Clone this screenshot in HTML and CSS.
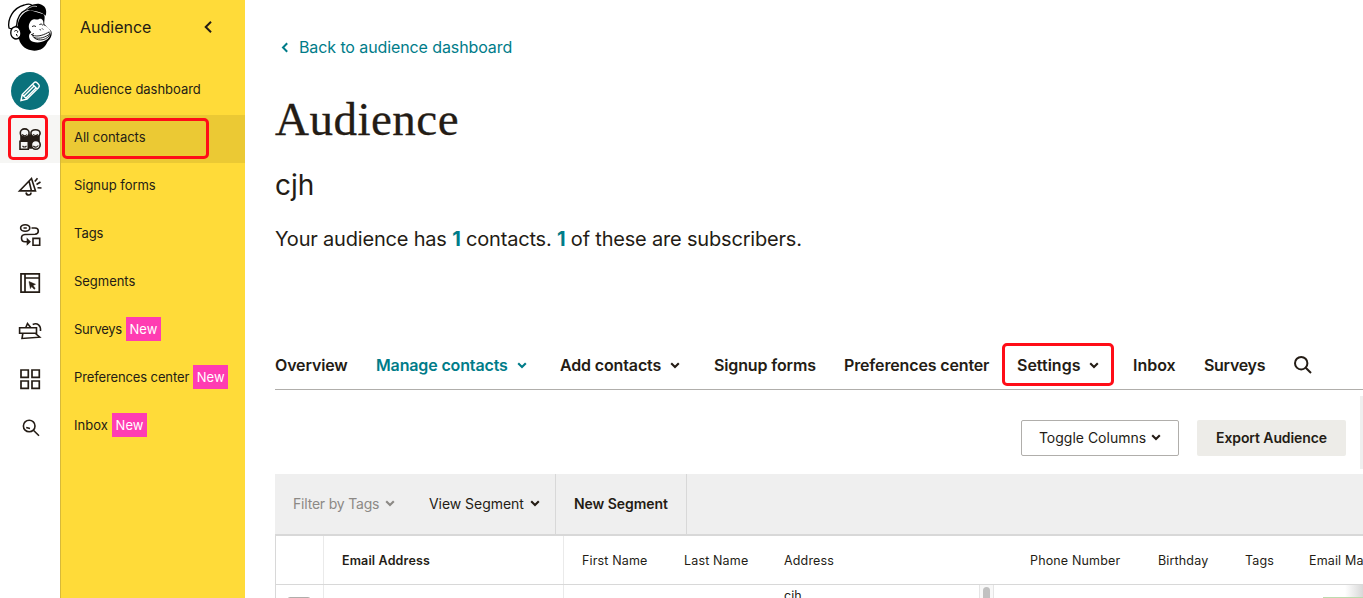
FILE: index.html
```html
<!DOCTYPE html>
<html lang="en">
<head>
<meta charset="utf-8">
<title>Audience</title>
<link rel="stylesheet" href="styles.css">
</head>
<body>
<svg class="defs"><defs><symbol id="chev" viewBox="0 0 10 7"><path d="M1.2 1.3 5 5.1 8.8 1.3" fill="none" stroke="currentColor" stroke-width="2.1"/></symbol></defs></svg>
<div class="app">
  <nav class="rail">
    <div class="logo"><svg width="60" height="62" viewBox="0 0 180 186">
      <path d="M53 78C54 56 70 34 91 31L131 43C137 50 132 60 133 73L154 94C158 107 150 118 142 126C135 143 122 152 103 152C80 152 62 138 57 118L42 116Z" fill="#000"/>
      <path d="M27 84C22 58 38 24 73 15C86 10 93 12 97 17L79 29C60 38 51 54 50 76C47 83 35 89 27 84Z" fill="#fff" stroke="#000" stroke-width="4"/>
      <path d="M76 31C84 18 104 9 119 12C136 16 142 31 137 47C123 35 103 31 76 31Z"/>
      <path d="M80 29C92 19 104 17 111 20" fill="none" stroke="#fff" stroke-width="2"/>
      <path d="M33 92C36 79 54 76 59 88C65 96 64 109 57 113C47 122 29 113 33 92Z" fill="#fff" stroke="#000" stroke-width="4"/>
      <path d="M43 94C49 88 56 94 52 98M49 102L52 109" fill="none" stroke="#000" stroke-width="3"/>
      <path d="M91 93C82 81 88 67 95 61C104 53 111 62 117 57C126 54 132 62 130 75C144 80 153 91 152 98C151 108 146 115 138 120C122 131 97 129 90 119C86 110 86 102 94 97Z" fill="#fff"/>
      <path d="M97 79Q102 75 107 79M119 73Q124 69 128 75M98 106C115 112 133 104 147 96M98 105C99 120 127 126 143 112C149 107 151 101 147 97M103 113C121 118 137 111 148 103M94 104L101 101M120 88L121 90M127 86L129 88" fill="none" stroke="#000" stroke-width="2.6" stroke-linecap="round"/>
    </svg></div>
    <div class="create"><svg width="38" height="38" viewBox="0 0 38 38" fill="none" stroke="#fff" stroke-width="1.4"><path d="M10 28.5 11.2 22.5 23 10.7Q24.5 9.4 26 10.7L27.7 12.4Q29 14 27.7 15.5L16 27.2ZM21.5 12.2 26.2 17M13 24 22.8 14.2M15 26 24.7 16.2M11.2 22.5 16 27.2"/></svg></div>
    <div class="rail-item current"><svg width="26" height="26" viewBox="0 0 26 26" fill="none" stroke="#241c15" stroke-width="1.6"><path d="M4 9H22V18H14.5V22H11.5V18H4Z" fill="#241c15"/><ellipse cx="7.7" cy="7" rx="4.4" ry="4.1" fill="#f6f6f4"/><ellipse cx="18.5" cy="7.3" rx="4.6" ry="3.6" fill="#f6f6f4"/><path d="M3 15.2H11.3V23.2H3Z" fill="#f6f6f4"/><circle cx="18.8" cy="18.8" r="4.4" fill="#f6f6f4"/><path d="M5 8.5Q8 11 10 8.5M16 8.5Q19 10.5 21 8.5M5.5 20Q7.5 22 9.5 20M16.3 20Q19 22.5 21.3 19.5" stroke-width="1.1"/></svg></div>
    <div class="rail-item"><svg width="26" height="26" viewBox="0 0 26 26" fill="none" stroke="#241c15" stroke-width="1.6"><path d="M14.5 4.5 18.5 17H2.5ZM2.5 16.8H18M12 7 14.5 17M9 18.5Q9.4 21 11.7 21Q14 21 14 18.5M17.8 7.5 20.5 4.2M19.5 10.5 23.5 8M20.5 13.7 24.5 14"/></svg></div>
    <div class="rail-item"><svg width="26" height="26" viewBox="0 0 26 26" fill="none" stroke="#241c15" stroke-width="1.6"><ellipse cx="8.2" cy="6" rx="4.6" ry="3.3"/><path d="M6.5 6H9.8M14.5 6H18Q21.3 6 21.3 9Q21.3 12 18 12.2L8 12.5Q4.5 12.8 4.5 16Q4.5 19.8 8 19.8H12.5M10.5 17.5 12.8 19.8 10.5 22ZM16 16.4H22.7V23.2H16Z"/></svg></div>
    <div class="rail-item"><svg width="26" height="26" viewBox="0 0 26 26" fill="none" stroke="#241c15" stroke-width="1.7"><path d="M4 3.9H22.3V22.2H4ZM8 4V22M8 8H22"/><path d="M12 11.5 18.5 14.3 16 15.4 18.2 18.4 17.1 19.3 14.7 16.5 13.4 18.6Z" fill="#241c15" stroke-width=".5"/></svg></div>
    <div class="rail-item"><svg width="26" height="26" viewBox="0 0 26 26" fill="none" stroke="#241c15" stroke-width="1.6"><path d="M2.6 9.7H19.5V15.3H2.6ZM8.8 9.5 10.5 5.5 13.7 9.5M5.8 15.7 5 20.5 22.7 19.2 18.5 15.5M15.7 6.4C20.5 4.5 24 7.4 23.5 13"/></svg></div>
    <div class="rail-item"><svg width="26" height="26" viewBox="0 0 26 26" fill="none" stroke="#241c15" stroke-width="1.7"><path d="M4 4H11.3V11.3H4ZM15 4H22.3V11.3H15ZM4 15H11.3V22.3H4ZM15 15H22.3V22.3H15Z"/></svg></div>
    <div class="rail-item"><svg width="26" height="26" viewBox="0 0 26 26" fill="none" stroke="#241c15" stroke-width="1.6"><circle cx="12.2" cy="12" r="5.8"/><path d="M16.4 16.2 22 21.7M9.2 13.6 13 14.6"/></svg></div>
    <i class="mark mark-rail"></i>
  </nav>
  <aside class="side">
    <header class="side-head"><span>Audience</span><svg width="10" height="14" viewBox="0 0 10 14"><path d="M8 1.7 2.7 7 8 12.3" fill="none" stroke="#241c15" stroke-width="2"/></svg></header>
    <a class="side-item"><span>Audience dashboard</span></a>
    <a class="side-item selected"><span>All contacts</span></a>
    <a class="side-item"><span>Signup forms</span></a>
    <a class="side-item"><span>Tags</span></a>
    <a class="side-item"><span>Segments</span></a>
    <a class="side-item"><span class="tight">Surveys</span><b>New</b></a>
    <a class="side-item"><span class="snug">Preferences center</span><b>New</b></a>
    <a class="side-item"><span class="loose">Inbox</span><b>New</b></a>
    <i class="mark mark-side"></i>
  </aside>
  <main class="main">
    <a class="back"><svg width="9" height="11" viewBox="0 0 9 11"><path d="M7.2 1.2 3 5.5 7.2 9.8" fill="none" stroke="currentColor" stroke-width="2"/></svg><span>Back to audience dashboard</span></a>
    <h1>Audience</h1>
    <h2>cjh</h2>
    <p class="summary">Your audience has <b>1</b> contacts. <b>1</b> of these are subscribers.</p>
    <nav class="tabs">
      <a class="tab overview"><span>Overview</span></a>
      <a class="tab manage"><span>Manage contacts</span><svg width="10" height="7"><use href="#chev"/></svg></a>
      <a class="tab add"><span>Add contacts</span><svg width="10" height="7"><use href="#chev"/></svg></a>
      <a class="tab signup"><span>Signup forms</span></a>
      <a class="tab prefs"><span>Preferences center</span></a>
      <a class="tab settings"><span>Settings</span><svg width="10" height="7"><use href="#chev"/></svg><i class="mark mark-tab"></i></a>
      <a class="tab inbox"><span>Inbox</span></a>
      <a class="tab surveys"><span>Surveys</span></a>
      <svg class="find" width="20" height="20" viewBox="0 0 20 20" fill="none" stroke="#241c15" stroke-width="2"><circle cx="8.2" cy="8.2" r="6.2"/><path d="M12.7 12.7 18 18"/></svg>
    </nav>
    <div class="actions">
      <button class="toggle"><span>Toggle Columns</span><svg width="10" height="7"><use href="#chev"/></svg></button>
      <button class="export"><span>Export Audience</span></button>
      <i class="edge"></i>
    </div>
    <div class="filters">
      <a class="filter tags"><span>Filter by Tags</span><svg width="10" height="7"><use href="#chev"/></svg></a>
      <a class="filter view"><span>View Segment</span><svg width="10" height="7"><use href="#chev"/></svg></a>
      <a class="filter new"><span>New Segment</span></a>
    </div>
    <div class="table">
      <div class="row head"><div></div><div><b>Email Address</b></div><div><span>First Name</span></div><div><span>Last Name</span></div><div><span>Address</span></div><div><span>Phone Number</span></div><div><span>Birthday</span></div><div><span>Tags</span></div><div><span>Email Marketing</span></div></div>
      <div class="row body"><div><i class="check"></i></div><div></div><div></div><div></div><div class="address"><span>cjh</span><i class="scroll"></i></div><div></div><div></div><div></div><div class="status"><i></i></div></div>
    </div>
  </main>
</div>
</body>
</html>
```
FILE: styles.css
```css
* { box-sizing: border-box; }
body { margin: 0; background: #fff; color: #241c15; font-family: Inter, "Liberation Sans", sans-serif; font-size: 13px; overflow: hidden; }
.defs { position: absolute; width: 0; height: 0; }
span, b { white-space: nowrap; }
.app { display: flex; width: 1363px; height: 598px; overflow: hidden; }

.rail { position: relative; flex: none; width: 60px; display: flex; flex-direction: column; }
.logo { height: 72px; }
.logo svg { display: block; }
.create { width: 38px; height: 38px; margin: 0 0 5px 11px; border-radius: 50%; background: #0a727c; }
.create svg { display: block; }
.rail-item { height: 48px; padding: 11px 17px; }
.rail-item svg { display: block; }
.current { background: #f6f6f4; }

.mark { position: absolute; border: 3px solid #ff0d17; border-radius: 5px; }
.mark-rail { left: 8px; top: 115px; width: 40px; height: 45px; }
.mark-side { left: 1px; top: 118px; width: 147px; height: 41px; }
.mark-tab { left: -15px; top: -21px; width: 112px; height: 43px; }

.side { position: relative; flex: none; width: 185px; border-left: 1px solid #d7b93a; background: #ffdb39; }
.side-head { height: 67px; display: flex; align-items: flex-start; padding: 17px 0 0 19px; font-size: 16px; line-height: 20px; }
.side-head span { width: 123px; }
.side-head svg { margin-top: 3px; }
.side-item { height: 48px; display: flex; align-items: center; gap: 4px; padding: 0 0 4px 13px; letter-spacing: -.03px; }
.side-item b { width: 35px; height: 24px; line-height: 25px; text-align: center; font-weight: 400; letter-spacing: 0; color: #fff; background: #ff3cb2; }
.side-item .tight { letter-spacing: -.25px; }
.side-item .snug { letter-spacing: -.12px; }
.side-item .loose { letter-spacing: .05px; }
.selected { background: #ebc934; }

.main { flex: none; width: 1118px; padding-left: 30px; }
.back { display: flex; align-items: center; gap: 10px; height: 24px; margin-top: 35px; padding-left: 5px; font-size: 16px; color: #007c89; }
.back span { letter-spacing: -.1px; }
h1 { margin: 30px 0 0; height: 60px; font: 400 47px/60px "Liberation Serif", serif; letter-spacing: .5px; -webkit-text-stroke: .3px #241c15; }
h2 { margin: 16px 0 0; font-size: 28px; line-height: 40px; font-weight: 400; }
.summary { margin: 19px 0 0; font-size: 20px; line-height: 30px; letter-spacing: -.19px; }
.summary b { color: #007c89; font-weight: 700; }

.tabs { display: flex; align-items: center; height: 51px; margin-top: 85px; padding-top: 2px; border-bottom: 1px solid #b0aeab; font-size: 16px; font-weight: 600; letter-spacing: -.14px; }
.tab { position: relative; flex: none; display: flex; align-items: center; height: 2px; }
.tab svg { margin-left: 9px; flex: none; }
.overview { width: 101px; }
.manage { width: 184px; color: #007c89; }
.add { width: 154px; }
.signup { width: 130px; }
.prefs { width: 173px; }
.settings { width: 116px; letter-spacing: 0; }
.inbox { width: 71px; letter-spacing: 0; }
.surveys { width: 89px; letter-spacing: -.3px; }

.actions { position: relative; display: flex; height: 84px; padding: 30px 0 0 746px; gap: 18px; }
button { height: 36px; display: flex; align-items: center; justify-content: center; padding: 0 0 2px; border: 0; border-radius: 2px; color: #241c15; font: 14px Inter, sans-serif; }
.toggle { width: 158px; gap: 5px; border: 1px solid #b0aeab; background: #fff; }
.export { width: 149px; font-weight: 600; letter-spacing: -.1px; background: #edece8; }
.edge { position: absolute; right: 0; top: 6px; width: 3px; height: 73px; background: #efefef; }

.filters { display: flex; height: 60px; background: #efefef; font-size: 14px; letter-spacing: -.05px; }
.filter { display: flex; align-items: center; padding: 0 0 1px 18px; }
.filter svg { margin-left: 6px; }
.tags { width: 136px; color: #8c8985; letter-spacing: -.2px; }
.view { width: 145px; border-right: 1px solid #d8d8d8; }
.new { width: 131px; border-right: 1px solid #d8d8d8; font-weight: 600; }

.table { border-top: 2px solid #d8d8d8; border-left: 1px solid #d8d8d8; }
.row { display: grid; grid-template-columns: 48px 240px 102px 100px 246px 128px 87px 64px 72px; border-bottom: 1px solid #d8d8d8; }
.row > div { padding-left: 18px; overflow: hidden; }
.row > div:nth-child(-n+2) { border-right: 1px solid #eaeaea; }
.head { height: 49px; line-height: 49px; font-size: 12.5px; letter-spacing: .15px; }
.head b { font-weight: 600; }
.body { height: 48px; }
.row > .address { display: flex; justify-content: space-between; line-height: 21px; font-size: 12.5px; }
.scroll { width: 15px; padding: 2px 3px 0; margin-right: 18px; border: solid #e5e5e5; border-width: 0 1px; background: #f8f8f8; }
.scroll::before { content: ""; display: block; height: 40px; border-radius: 4px; background: #c1c1c1; }
.row > div:first-child { padding-left: 11px; }
.check { display: block; width: 24px; height: 24px; margin-top: 12px; border: 1px solid #b0aeab; border-radius: 3px; }
.row > .status { padding: 12px 0 0 32px; background: linear-gradient(90deg, transparent 54px, #d8d8d8 72px) no-repeat; }
.status i { display: block; height: 24px; border-top: 1px solid #bcdcae; }
```
